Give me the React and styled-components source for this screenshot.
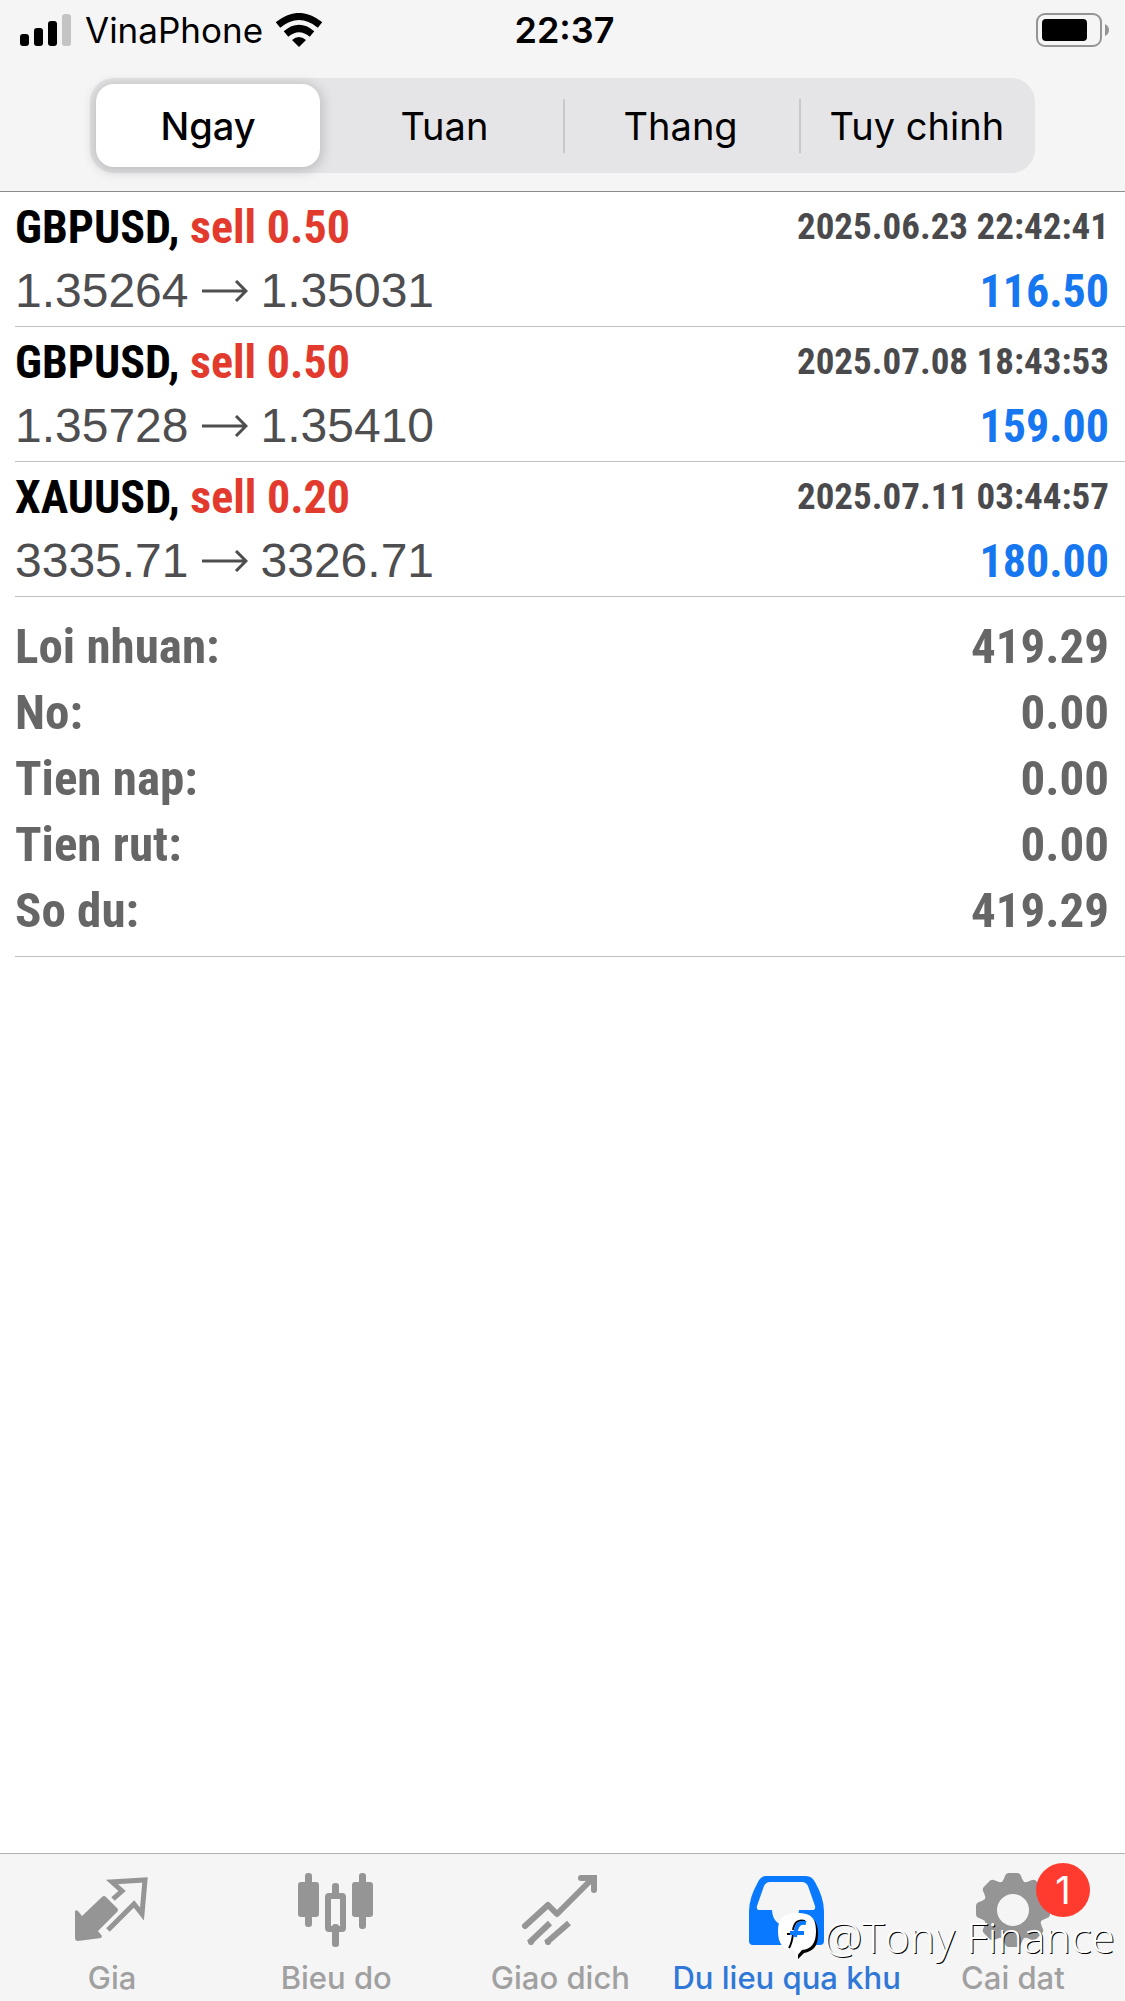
import React, {useState} from 'react';
import styled, {createGlobalStyle, css} from 'styled-components';

const condensed = '"Roboto Condensed", Roboto, sans-serif';

const GlobalStyle = createGlobalStyle`
  * {
    box-sizing: border-box;
  }

  body {
    margin: 0;
    background: #fff;
    color: #000;
    font-family: Inter, sans-serif;
  }

  button {
    border: 0;
    padding: 0;
    background: none;
    color: inherit;
    font-family: inherit;
    cursor: pointer;
  }
`;

const Page = styled.div`
  position: relative;
  display: flex;
  flex-direction: column;
  min-height: 100vh;
`;

const Header = styled.header`
  background: #f5f5f5;
  border-bottom: 1px solid #8c8c8c;
  padding-bottom: 18px;
`;

const StatusBar = styled.div`
  display: grid;
  grid-template-columns: 1fr auto 1fr;
  align-items: center;
  height: 60px;
  padding: 0 16px 0 20px;
`;

const Carrier = styled.div`
  display: flex;
  align-items: center;
  gap: 13px;
  font-size: 35px;
`;

const Clock = styled.time`
  font-size: 36px;
  font-weight: 600;
`;

const Battery = styled.svg`
  justify-self: end;
`;

const Segments = styled.div`
  display: grid;
  grid-template-columns: repeat(4, 1fr);
  width: 84%;
  height: 95px;
  margin: 18px auto 0;
  border-radius: 24px;
  background: #e5e5e7;
`;

const Segment = styled.button`
  display: flex;
  align-items: center;
  justify-content: center;
  font-size: 38px;

  ${({$active}) => $active && css`
    margin: 6px;
    border-radius: 18px;
    background: #fff;
    font-weight: 500;
    box-shadow: 0 2px 12px 3px rgba(0, 0, 0, 0.16);
  `}

  ${({$divided}) => $divided && css`
    background: linear-gradient(#c9c9cc, #c9c9cc) left center / 2px 54px no-repeat;
  `}
`;

const Main = styled.main`
  flex: 1;
  padding-left: 15px;
`;

const Deals = styled.ul`
  margin: 0;
  padding: 0;
  list-style: none;
`;

const Deal = styled.li`
  padding: 3px 16px 3px 0;
  border-bottom: 1px solid #c0c0c2;
`;

const Line = styled.div`
  display: flex;
  align-items: center;
  justify-content: space-between;
  height: 64px;
  line-height: 64px;
`;

const Symbol = styled.span`
  font-family: ${condensed};
  font-size: 46px;
  font-weight: 700;
`;

const Side = styled.span`
  color: #e23b2e;
`;

const Closed = styled.time`
  font-family: ${condensed};
  font-size: 37px;
  font-weight: 700;
  color: #4a4a4d;
`;

const Prices = styled.span`
  display: flex;
  align-items: center;
  gap: 13px;
  font-family: "Liberation Sans", sans-serif;
  font-size: 48px;
  color: #4e4e50;
`;

const Profit = styled.span`
  font-family: ${condensed};
  font-size: 46px;
  font-weight: 700;
  color: #1677f0;
`;

const Summary = styled.dl`
  margin: 0;
  padding: 17px 16px 12px 0;
  border-bottom: 1px solid #c0c0c2;
`;

const SummaryRow = styled.div`
  display: flex;
  justify-content: space-between;
  font-family: ${condensed};
  font-size: 49px;
  font-weight: 700;
  line-height: 66px;
  color: #666;

  dd {
    margin: 0;
  }
`;

const TabBar = styled.nav`
  display: grid;
  grid-template-columns: repeat(5, 1fr);
  background: #f5f5f5;
  border-top: 1px solid #b0b0b0;
`;

const Tab = styled.button`
  display: flex;
  flex-direction: column;
  align-items: center;
  justify-content: flex-start;
  gap: 11px;
  height: 147px;
  padding-top: 19px;
  font-size: 31px;
  font-weight: 500;
  line-height: 36px;
  white-space: nowrap;
  color: ${({$active}) => ($active ? '#2f78d8' : '#a0a0a0')};
`;

const IconBox = styled.span`
  position: relative;
  display: flex;
  color: ${({$active}) => ($active ? '#097aff' : '#959595')};
`;

const Badge = styled.span`
  position: absolute;
  top: -10px;
  left: 61px;
  width: 54px;
  height: 54px;
  border-radius: 50%;
  background: #ff3b30;
  color: #fff;
  font-size: 38px;
  font-weight: 400;
  line-height: 54px;
  text-align: center;
`;

const Watermark = styled.div`
  position: absolute;
  right: 10px;
  bottom: 36px;
  display: flex;
  align-items: center;
  gap: 4px;
  font-family: "Open Sans", sans-serif;
  font-size: 43px;
  font-weight: 300;
  line-height: 56px;
  color: #fff;
  text-shadow: 1px 1px 0 #000;
  pointer-events: none;
`;

const SignalIcon = () => (
  <svg width="52" height="34" viewBox="0 0 52 34" aria-hidden="true">
    <rect x="0" y="21" width="9" height="12" rx="3" />
    <rect x="14" y="15" width="9" height="18" rx="3" />
    <rect x="28" y="8" width="9" height="25" rx="3" />
    <rect x="42" y="1" width="9" height="32" rx="3" fill="#c4c4c4" />
  </svg>
);

const WifiIcon = () => (
  <svg width="46" height="34" viewBox="0 0 46 34" aria-hidden="true">
    <path d="M2 12 Q23 -5 44 12" fill="none" stroke="#000" strokeWidth="7" />
    <path d="M10 21 Q23 10 36 21" fill="none" stroke="#000" strokeWidth="7" />
    <path d="M16 27 Q23 21 30 27 L23 34 Z" />
  </svg>
);

const BatteryIcon = () => (
  <Battery width="73" height="34" viewBox="0 0 73 34" aria-hidden="true">
    <rect x="1" y="1" width="64" height="32" rx="8" fill="none" stroke="#949494" strokeWidth="2" />
    <rect x="6" y="6" width="45" height="22" rx="4" />
    <path d="M69 11 Q73 13 73 17 Q73 21 69 23 Z" fill="#949494" />
  </Battery>
);

const ArrowIcon = () => (
  <svg
    width="46"
    height="22"
    viewBox="0 0 46 22"
    fill="none"
    stroke="currentColor"
    strokeWidth="3"
    role="img"
    aria-label="to"
  >
    <path d="M0 11 H44 M34 1 L44 11 L34 21" />
  </svg>
);

const QuotesIcon = () => (
  <svg width="76" height="76" viewBox="2 0 76 76" aria-hidden="true">
    <path
      d="M3 39 Q3 36 6 38 L10 43 L30 24 Q32 22 34 24 L45 35 Q47 37 45 39 L26 58 L30 63 L29 65 L6 68 Q3 68 3 65 Z"
      fill="currentColor"
    />
    <path
      d="M41 26 L50 18 L40 9 L73 7 L70 41 L62 31 L36 57"
      fill="none"
      stroke="currentColor"
      strokeWidth="5"
    />
  </svg>
);

const ChartIcon = () => (
  <svg width="76" height="76" viewBox="1 0 76 76" fill="currentColor" aria-hidden="true">
    <rect x="1" y="9" width="21" height="35" rx="3" />
    <rect x="8" y="0" width="7" height="54" rx="3" />
    <rect x="55" y="9" width="21" height="35" rx="3" />
    <rect x="62" y="0" width="7" height="56" rx="3" />
    <rect x="35" y="10" width="7" height="13" rx="3" />
    <rect x="35" y="51" width="7" height="23" rx="3" />
    <rect x="31" y="23" width="15" height="33" rx="1" fill="none" stroke="currentColor" strokeWidth="6" />
  </svg>
);

const TradeIcon = () => (
  <svg
    width="76"
    height="76"
    viewBox="1 0 76 76"
    fill="none"
    stroke="currentColor"
    strokeWidth="6"
    aria-hidden="true"
  >
    <path d="M4 53 L27 32 L36 41 L71 6" strokeLinecap="round" strokeLinejoin="round" />
    <path d="M60 5 H73 V17" strokeLinecap="round" />
    <path d="M8 70 L29 50 M25 70 L48 50" />
    <circle cx="10" cy="69" r="3" fill="currentColor" stroke="none" />
    <circle cx="27" cy="69" r="3" fill="currentColor" stroke="none" />
  </svg>
);

const HistoryIcon = () => (
  <svg width="76" height="76" viewBox="1 0 76 76" aria-hidden="true">
    <path
      fillRule="evenodd"
      d="M18 3 H58 Q64 3 67 9 Q76 25 76 38 V68 Q76 72 72 72 H5 Q1 72 1 68 V38 Q1 25 10 9 Q13 3 18 3 Z
         M22 9 Q18 9 16 13 L9 33 Q8 37 12 37 H24 Q25 52 38 52 Q50 52 51 37 H64 Q68 37 67 33 L60 13 Q58 9 54 9 Z"
      fill="currentColor"
    />
  </svg>
);

const SettingsIcon = () => (
  <svg width="76" height="76" viewBox="0 0 76 76" aria-hidden="true">
    <g fill="currentColor">
      <circle cx="38" cy="37" r="30" />
      {[0, 45, 90, 135, 180, 225, 270, 315].map((angle) => (
        <path
          key={angle}
          d="M24 12 Q28 9 30 3 Q31 0 34 0 H42 Q45 0 46 3 Q48 9 52 12 Z"
          transform={`rotate(${angle} 38 37)`}
        />
      ))}
    </g>
    <circle cx="38" cy="37" r="16" fill="#f5f5f5" />
  </svg>
);

const WatermarkLogo = () => (
  <svg width="42" height="48" viewBox="0 0 42 48" aria-hidden="true">
    <path d="M22 2 C35 2 40 8 40 21 C40 34 35 38 26 40 L20 46 L20 40 Z" fill="#000" />
    <path d="M19 0 C33 0 38 5 38 18 C38 31 33 36 24 37 L18 44 L17 37 C5 37 0 31 0 18 C0 5 6 0 19 0 Z" fill="#fff" />
    <path d="M27 8 Q17 5 15 17 M9 21 H15 Q14 30 11 35" fill="none" stroke="#000" strokeWidth="2" />
    <path d="M28 10 Q20 8 18 17 L17 24 M12 20 H26" fill="none" stroke="#097aff" strokeWidth="4" />
  </svg>
);

const periods = ['Ngay', 'Tuan', 'Thang', 'Tuy chinh'];

const deals = [
  {symbol: 'GBPUSD', side: 'sell 0.50', closed: '2025.06.23 22:42:41', from: '1.35264', to: '1.35031', profit: '116.50'},
  {symbol: 'GBPUSD', side: 'sell 0.50', closed: '2025.07.08 18:43:53', from: '1.35728', to: '1.35410', profit: '159.00'},
  {symbol: 'XAUUSD', side: 'sell 0.20', closed: '2025.07.11 03:44:57', from: '3335.71', to: '3326.71', profit: '180.00'},
];

const summary = [
  ['Loi nhuan:', '419.29'],
  ['No:', '0.00'],
  ['Tien nap:', '0.00'],
  ['Tien rut:', '0.00'],
  ['So du:', '419.29'],
];

const tabs = [
  {label: 'Gia', Icon: QuotesIcon},
  {label: 'Bieu do', Icon: ChartIcon},
  {label: 'Giao dich', Icon: TradeIcon},
  {label: 'Du lieu qua khu', Icon: HistoryIcon},
  {label: 'Cai dat', Icon: SettingsIcon, badge: 1},
];

const App = () => {
  const [period, setPeriod] = useState(0);
  const [tab, setTab] = useState(3);

  return (
    <Page>
      <GlobalStyle />

      <Header>
        <StatusBar>
          <Carrier>
            <SignalIcon />
            <span>VinaPhone</span>
            <WifiIcon />
          </Carrier>
          <Clock>22:37</Clock>
          <BatteryIcon />
        </StatusBar>

        <Segments>
          {periods.map((name, i) => (
            <Segment
              key={name}
              type='button'
              aria-pressed={i === period}
              $active={i === period}
              $divided={i > period + 1}
              onClick={() => setPeriod(i)}
            >
              {name}
            </Segment>
          ))}
        </Segments>
      </Header>

      <Main>
        <Deals>
          {deals.map((deal) => (
            <Deal key={deal.closed}>
              <Line>
                <Symbol>{deal.symbol}, <Side>{deal.side}</Side></Symbol>
                <Closed>{deal.closed}</Closed>
              </Line>
              <Line>
                <Prices>{deal.from}<ArrowIcon />{deal.to}</Prices>
                <Profit>{deal.profit}</Profit>
              </Line>
            </Deal>
          ))}
        </Deals>

        <Summary>
          {summary.map(([label, value]) => (
            <SummaryRow key={label}>
              <dt>{label}</dt>
              <dd>{value}</dd>
            </SummaryRow>
          ))}
        </Summary>
      </Main>

      <TabBar>
        {tabs.map(({label, Icon, badge}, i) => (
          <Tab key={label} type='button' $active={i === tab} onClick={() => setTab(i)}>
            <IconBox $active={i === tab}>
              <Icon />
              {badge && <Badge>{badge}</Badge>}
            </IconBox>
            {label}
          </Tab>
        ))}
      </TabBar>

      <Watermark>
        <WatermarkLogo />
        <span>@Tony Finance</span>
      </Watermark>
    </Page>
  );
};

export default App;
